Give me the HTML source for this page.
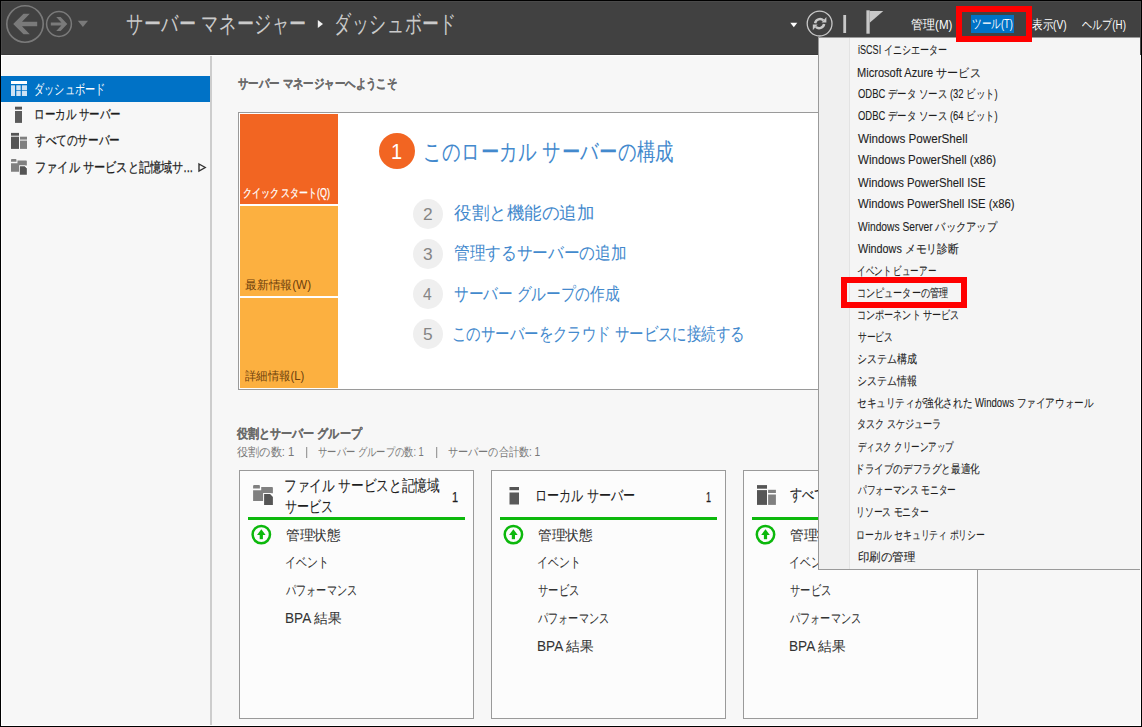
<!DOCTYPE html><html lang="ja"><head><meta charset="utf-8"><style>
*{margin:0;padding:0;box-sizing:border-box}
html,body{width:1142px;height:727px;overflow:hidden;background:#000}
body{position:relative;font-family:"Liberation Sans",sans-serif}
.a{position:absolute}
.tx{position:absolute;white-space:pre;line-height:1;transform-origin:0 0}
</style></head><body>
<div class="a" style="left:1px;top:1px;width:1140px;height:725px;background:#ffffff"></div>
<div class="a" style="left:2px;top:56px;width:1138px;height:669px;background:#f7f7f7"></div>
<div class="a" style="left:1px;top:1px;width:1140px;height:54px;background:#4a4a4a"></div>
<div class="a" style="left:2px;top:2px;width:1138px;height:52px;background:#414141"></div>
<div class="a" style="left:2px;top:54px;width:1138px;height:1px;background:#3a3a3a"></div>
<div class="a" style="left:210px;top:56px;width:2px;height:669px;background:#cdcdcd"></div>
<div class="a" style="left:1px;top:76px;width:209px;height:26px;background:#0072c6"></div>
<div class="a" style="left:238px;top:112px;width:600px;height:278px;background:#fff;border:1px solid #9a9a9a"></div>
<div class="a" style="left:240px;top:114px;width:98px;height:90px;background:#f26522"></div>
<div class="a" style="left:240px;top:206px;width:98px;height:90px;background:#fcb040"></div>
<div class="a" style="left:240px;top:298px;width:98px;height:90px;background:#fcb040"></div>
<div class="a" style="left:379px;top:133px;width:36px;height:36px;border-radius:50%;background:#f26522"></div>
<div class="a" style="left:413px;top:198.5px;width:30px;height:30px;border-radius:50%;background:#efefef"></div>
<div class="a" style="left:413px;top:238.5px;width:30px;height:30px;border-radius:50%;background:#efefef"></div>
<div class="a" style="left:413px;top:278.5px;width:30px;height:30px;border-radius:50%;background:#efefef"></div>
<div class="a" style="left:413px;top:318.5px;width:30px;height:30px;border-radius:50%;background:#efefef"></div>
<div class="a" style="left:239px;top:470px;width:235px;height:249px;background:#fcfcfc;border:1px solid #9a9a9a"></div>
<div class="a" style="left:248px;top:517px;width:217px;height:3px;background:#0cb80c"></div>
<div class="a" style="left:491px;top:470px;width:235px;height:249px;background:#fcfcfc;border:1px solid #9a9a9a"></div>
<div class="a" style="left:500px;top:517px;width:217px;height:3px;background:#0cb80c"></div>
<div class="a" style="left:743px;top:470px;width:235px;height:249px;background:#fcfcfc;border:1px solid #9a9a9a"></div>
<div class="a" style="left:752px;top:517px;width:217px;height:3px;background:#0cb80c"></div>
<svg class="a" style="left:0;top:0" width="1142" height="727" viewBox="0 0 1142 727">
<circle cx="25" cy="24" r="18.2" fill="none" stroke="#7a7a7a" stroke-width="1.6"/>
<path d="M13.2 24 L23.5 13.8 L29.8 13.8 L22 21.8 L37.2 21.8 L37.2 26.3 L22 26.3 L29.8 34.2 L23.5 34.2 Z" fill="#7a7a7a"/>
<circle cx="59" cy="24" r="12.4" fill="none" stroke="#7a7a7a" stroke-width="1.5"/>
<path d="M67.3 24 L60.6 16.9 L56.2 16.9 L61.4 22.5 L50.8 22.5 L50.8 25.5 L61.4 25.5 L56.2 31.1 L60.6 31.1 Z" fill="#7a7a7a"/>
<path d="M77.8 20.8 L88 20.8 L82.9 27 Z" fill="#7a7a7a"/>
<path d="M317.8 20 L323 24 L317.8 28 Z" fill="#f0f0f0"/>
<path d="M790.3 22.8 L797.3 22.8 L793.8 27.3 Z" fill="#ffffff"/>
<circle cx="819.6" cy="23.6" r="12.4" fill="none" stroke="#c8c8c8" stroke-width="1.3"/>
<path d="M815.1 23.2 A5 5 0 0 1 823.4 20.4" fill="none" stroke="#c8c8c8" stroke-width="2.5"/>
<path d="M821.6 22.6 L826.4 16.9 L826.4 22.6 Z" fill="#c8c8c8"/>
<path d="M824.1 24 A5 5 0 0 1 815.8 26.8" fill="none" stroke="#c8c8c8" stroke-width="2.5"/>
<path d="M817.6 24.6 L812.8 30.3 L812.8 24.6 Z" fill="#c8c8c8"/>
<rect x="843.3" y="15" width="2.8" height="18" fill="#c8c8c8"/>
<rect x="866.4" y="10.3" width="3.3" height="23.4" fill="#c8c8c8"/>
<path d="M869.7 10.9 L883.3 10.9 L869.7 22.8 Z" fill="#c8c8c8"/>
<rect x="11" y="81" width="16" height="3" fill="#ffffff"/>
<rect x="11" y="85.3" width="4" height="10.7" fill="#cfe2f3"/>
<rect x="16.3" y="85.3" width="4.4" height="5" fill="#cfe2f3"/>
<rect x="21.9" y="85.3" width="5.1" height="5" fill="#cfe2f3"/>
<rect x="16.3" y="91" width="4.4" height="5" fill="#cfe2f3"/>
<rect x="21.9" y="91" width="5.1" height="5" fill="#cfe2f3"/>
<rect x="15" y="106.7" width="7" height="2.9" fill="#555"/>
<rect x="15" y="111" width="7" height="11.9" fill="#5a5a5a"/>
<rect x="11.0" y="132.9" width="8" height="2.8" fill="#555"/><rect x="11.0" y="136.7" width="8" height="12.2" fill="#555"/><rect x="20.0" y="136.7" width="7" height="2.9" fill="#808080"/><rect x="20.0" y="140.6" width="7" height="8.3" fill="#808080"/>
<g transform="translate(11.00 158.90) scale(0.800)"><path d="M1 0 L6 0 Q6.8 0 6.8 1 L6.8 3.6 L0 3.6 L0 1 Q0 0 1 0 Z" fill="#808080"/><path d="M8.1 2 L19 2 Q19.8 2 19.8 3 L19.8 8.2 L10.5 8.2 L10.5 16 L0 16 L0 5.3 L8.1 5.3 Z" fill="#808080"/><path d="M10 8.1 L17.6 8.1 L20.8 11.3 L20.8 20.9 L10 20.9 Z" fill="#fcfcfc"/><path d="M11 9.1 L17.2 9.1 L19.8 11.7 L19.8 19.9 L11 19.9 Z" fill="#555"/><path d="M17.2 9.1 L19.8 9.1 L19.8 11.7 Z" fill="#fff"/></g>
<path d="M199 164 L205.2 167.5 L199 171 Z" fill="none" stroke="#333" stroke-width="1.4"/>
<rect x="306.2" y="447" width="1" height="11" fill="#888"/>
<rect x="436.2" y="447" width="1" height="11" fill="#888"/>
<g transform="translate(253.10 485.00) scale(1.000)"><path d="M1 0 L6 0 Q6.8 0 6.8 1 L6.8 3.6 L0 3.6 L0 1 Q0 0 1 0 Z" fill="#808080"/><path d="M8.1 2 L19 2 Q19.8 2 19.8 3 L19.8 8.2 L10.5 8.2 L10.5 16 L0 16 L0 5.3 L8.1 5.3 Z" fill="#808080"/><path d="M10 8.1 L17.6 8.1 L20.8 11.3 L20.8 20.9 L10 20.9 Z" fill="#fcfcfc"/><path d="M11 9.1 L17.2 9.1 L19.8 11.7 L19.8 19.9 L11 19.9 Z" fill="#555"/><path d="M17.2 9.1 L19.8 9.1 L19.8 11.7 Z" fill="#fff"/></g>
<rect x="509.5" y="487" width="9.5" height="3.2" fill="#555"/>
<rect x="509.5" y="492.5" width="9.5" height="12" fill="#5a5a5a"/>
<rect x="757.0" y="485.1" width="10" height="3.6" fill="#555"/><rect x="757.0" y="490.1" width="10" height="14.8" fill="#555"/><rect x="768.1" y="489.8" width="7.8" height="3.2" fill="#808080"/><rect x="768.1" y="494.5" width="7.8" height="10.4" fill="#808080"/>
<circle cx="261.3" cy="534.6" r="8.7" fill="none" stroke="#0cb80c" stroke-width="2.5"/>
<path d="M261.3 529.2 L265.6 534.9 L257.0 534.9 Z" fill="#0cb80c"/>
<rect x="259.7" y="534.6" width="3.2" height="4.6" fill="#0cb80c"/>
<circle cx="513.4" cy="534.6" r="8.7" fill="none" stroke="#0cb80c" stroke-width="2.5"/>
<path d="M513.4 529.2 L517.7 534.9 L509.1 534.9 Z" fill="#0cb80c"/>
<rect x="511.8" y="534.6" width="3.2" height="4.6" fill="#0cb80c"/>
<circle cx="765.5" cy="534.6" r="8.7" fill="none" stroke="#0cb80c" stroke-width="2.5"/>
<path d="M765.5 529.2 L769.8 534.9 L761.2 534.9 Z" fill="#0cb80c"/>
<rect x="763.9" y="534.6" width="3.2" height="4.6" fill="#0cb80c"/>
</svg>
<div class="tx" style="left:125.59px;top:11.75px;font-size:24px;font-weight:normal;color:#cacaca;transform:scaleX(0.7148)">サーバー マネージャー</div>
<div class="tx" style="left:333.99px;top:12.35px;font-size:24px;font-weight:normal;color:#cacaca;transform:scaleX(0.7060)">ダッシュボード</div>
<div class="tx" style="left:910.80px;top:18.75px;font-size:12.5px;font-weight:normal;color:#ffffff;transform:scaleX(0.9250)">管理(M)</div>
<div class="tx" style="left:1032.00px;top:18.75px;font-size:12.5px;font-weight:normal;color:#ffffff;transform:scaleX(0.8095)">表示(V)</div>
<div class="tx" style="left:1082.00px;top:18.75px;font-size:12.5px;font-weight:normal;color:#ffffff;transform:scaleX(0.7786)">ヘルプ(H)</div>
<div class="tx" style="left:33.95px;top:81.60px;font-size:14px;font-weight:normal;color:#ffffff;transform:scaleX(0.7274)">ダッシュボード</div>
<div class="tx" style="left:33.90px;top:107.00px;font-size:14px;font-weight:normal;color:#1e1e1e;transform:scaleX(0.7504);-webkit-text-stroke:0.25px #1e1e1e">ローカル サーバー</div>
<div class="tx" style="left:35.40px;top:133.00px;font-size:14px;font-weight:normal;color:#1e1e1e;transform:scaleX(0.7586);-webkit-text-stroke:0.25px #1e1e1e">すべてのサーバー</div>
<div class="tx" style="left:34.60px;top:160.25px;font-size:14px;font-weight:normal;color:#1e1e1e;transform:scaleX(0.7990);-webkit-text-stroke:0.25px #1e1e1e">ファイル サービスと記憶域サ...</div>
<div class="tx" style="left:237.80px;top:76.65px;font-size:13px;font-weight:bold;color:#6a6a6a;transform:scaleX(0.8015);-webkit-text-stroke:0.15px #6a6a6a">サーバー マネージャーへようこそ</div>
<div class="tx" style="left:243.45px;top:186.55px;font-size:12px;font-weight:normal;color:#ffffff;transform:scaleX(0.7457);-webkit-text-stroke:0.25px #ffffff">クイック スタート(Q)</div>
<div class="tx" style="left:244.60px;top:278.50px;font-size:12px;font-weight:normal;color:#6e3f0c;transform:scaleX(0.9821)">最新情報(W)</div>
<div class="tx" style="left:244.60px;top:370.25px;font-size:12px;font-weight:normal;color:#6e3f0c;transform:scaleX(0.9460)">詳細情報(L)</div>
<div class="tx" style="left:423.07px;top:139.60px;font-size:24px;font-weight:normal;color:#4389cd;transform:scaleX(0.7674)">このローカル サーバーの構成</div>
<div class="tx" style="left:453.50px;top:204.20px;font-size:18px;font-weight:normal;color:#4389cd;transform:scaleX(0.9734)">役割と機能の追加</div>
<div class="tx" style="left:453.50px;top:244.20px;font-size:18px;font-weight:normal;color:#4389cd;transform:scaleX(0.8701)">管理するサーバーの追加</div>
<div class="tx" style="left:453.60px;top:284.70px;font-size:18px;font-weight:normal;color:#4389cd;transform:scaleX(0.8148)">サーバー グループの作成</div>
<div class="tx" style="left:452.00px;top:324.60px;font-size:18px;font-weight:normal;color:#4389cd;transform:scaleX(0.8017)">このサーバーをクラウド サービスに接続する</div>
<div class="tx" style="left:237.20px;top:426.95px;font-size:13px;font-weight:bold;color:#6a6a6a;transform:scaleX(0.8500);-webkit-text-stroke:0.15px #6a6a6a">役割とサーバー グループ</div>
<div class="tx" style="left:237.20px;top:445.50px;font-size:12px;font-weight:normal;color:#777777;transform:scaleX(0.9344)">役割の数: 1</div>
<div class="tx" style="left:318.20px;top:445.50px;font-size:12px;font-weight:normal;color:#777777;transform:scaleX(0.7737)">サーバー グループの数: 1</div>
<div class="tx" style="left:448.20px;top:445.50px;font-size:12px;font-weight:normal;color:#777777;transform:scaleX(0.8431)">サーバーの合計数: 1</div>
<div class="tx" style="left:284.21px;top:478.25px;font-size:16px;font-weight:normal;color:#1e1e1e;transform:scaleX(0.7923);-webkit-text-stroke:0.10px #1e1e1e">ファイル サービスと記憶域</div>
<div class="tx" style="left:285.00px;top:499.25px;font-size:16px;font-weight:normal;color:#1e1e1e;transform:scaleX(0.7532);-webkit-text-stroke:0.10px #1e1e1e">サービス</div>
<div class="tx" style="left:535.33px;top:488.30px;font-size:16px;font-weight:normal;color:#1e1e1e;transform:scaleX(0.7555);-webkit-text-stroke:0.10px #1e1e1e">ローカル サーバー</div>
<div class="tx" style="left:790.20px;top:487.20px;font-size:16px;font-weight:normal;color:#1e1e1e;transform:scaleX(0.7591);-webkit-text-stroke:0.10px #1e1e1e">すべてのサーバー</div>
<div class="tx" style="left:285.90px;top:527.80px;font-size:14px;font-weight:normal;color:#333333;transform:scaleX(0.9732);-webkit-text-stroke:0.05px #333333">管理状態</div>
<div class="tx" style="left:285.12px;top:554.80px;font-size:14px;font-weight:normal;color:#333333;transform:scaleX(0.7750);-webkit-text-stroke:0.05px #333333">イベント</div>
<div class="tx" style="left:285.90px;top:582.80px;font-size:14px;font-weight:normal;color:#333333;transform:scaleX(0.7247);-webkit-text-stroke:0.05px #333333">パフォーマンス</div>
<div class="tx" style="left:284.93px;top:611.30px;font-size:14px;font-weight:normal;color:#333333;transform:scaleX(0.9719);-webkit-text-stroke:0.05px #333333">BPA 結果</div>
<div class="tx" style="left:537.60px;top:527.80px;font-size:14px;font-weight:normal;color:#333333;transform:scaleX(0.9732);-webkit-text-stroke:0.05px #333333">管理状態</div>
<div class="tx" style="left:536.83px;top:554.80px;font-size:14px;font-weight:normal;color:#333333;transform:scaleX(0.7750);-webkit-text-stroke:0.05px #333333">イベント</div>
<div class="tx" style="left:537.60px;top:583.30px;font-size:14px;font-weight:normal;color:#333333;transform:scaleX(0.7364);-webkit-text-stroke:0.05px #333333">サービス</div>
<div class="tx" style="left:537.60px;top:610.80px;font-size:14px;font-weight:normal;color:#333333;transform:scaleX(0.7247);-webkit-text-stroke:0.05px #333333">パフォーマンス</div>
<div class="tx" style="left:536.63px;top:639.30px;font-size:14px;font-weight:normal;color:#333333;transform:scaleX(0.9719);-webkit-text-stroke:0.05px #333333">BPA 結果</div>
<div class="tx" style="left:789.60px;top:527.80px;font-size:14px;font-weight:normal;color:#333333;transform:scaleX(0.9732);-webkit-text-stroke:0.05px #333333">管理状態</div>
<div class="tx" style="left:788.83px;top:554.80px;font-size:14px;font-weight:normal;color:#333333;transform:scaleX(0.7750);-webkit-text-stroke:0.05px #333333">イベント</div>
<div class="tx" style="left:789.60px;top:583.30px;font-size:14px;font-weight:normal;color:#333333;transform:scaleX(0.7364);-webkit-text-stroke:0.05px #333333">サービス</div>
<div class="tx" style="left:789.60px;top:610.80px;font-size:14px;font-weight:normal;color:#333333;transform:scaleX(0.7247);-webkit-text-stroke:0.05px #333333">パフォーマンス</div>
<div class="tx" style="left:788.63px;top:639.30px;font-size:14px;font-weight:normal;color:#333333;transform:scaleX(0.9719);-webkit-text-stroke:0.05px #333333">BPA 結果</div>
<div class="tx" style="left:390.59px;top:140.75px;font-size:22px;font-weight:normal;color:#ffffff;transform:scaleX(0.9091)">1</div>
<div class="tx" style="left:423.30px;top:205.50px;font-size:17px;font-weight:normal;color:#858585;transform:scaleX(1.0222)">2</div>
<div class="tx" style="left:423.30px;top:245.50px;font-size:17px;font-weight:normal;color:#858585;transform:scaleX(1.0222)">3</div>
<div class="tx" style="left:423.30px;top:285.50px;font-size:17px;font-weight:normal;color:#858585;transform:scaleX(0.9200)">4</div>
<div class="tx" style="left:423.30px;top:325.50px;font-size:17px;font-weight:normal;color:#858585;transform:scaleX(1.0222)">5</div>
<div class="tx" style="left:452.41px;top:489.60px;font-size:14px;font-weight:normal;color:#1e1e1e;transform:scaleX(0.7857);-webkit-text-stroke:0.25px #1e1e1e">1</div>
<div class="tx" style="left:705.56px;top:489.90px;font-size:14px;font-weight:normal;color:#1e1e1e;transform:scaleX(0.6429);-webkit-text-stroke:0.25px #1e1e1e">1</div>
<div class="a" style="left:818px;top:37px;width:322px;height:533px;background:#f5f5f5;border:1px solid #9a9a9a;border-right:none"></div>
<div class="a" style="left:819px;top:38px;width:30px;height:531px;background:#f0f0f0"></div>
<div class="a" style="left:849px;top:38px;width:1px;height:531px;background:#e3e3e3"></div>
<div class="tx" style="left:857.50px;top:44.00px;font-size:12px;font-weight:normal;color:#1e1e1e;transform:scaleX(0.7551);-webkit-text-stroke:0.10px #1e1e1e">iSCSI イニシエーター</div>
<div class="tx" style="left:856.58px;top:66.50px;font-size:12px;font-weight:normal;color:#1e1e1e;transform:scaleX(0.9220);-webkit-text-stroke:0.10px #1e1e1e">Microsoft Azure サービス</div>
<div class="tx" style="left:857.50px;top:88.00px;font-size:12px;font-weight:normal;color:#1e1e1e;transform:scaleX(0.7881);-webkit-text-stroke:0.10px #1e1e1e">ODBC データ ソース (32 ビット)</div>
<div class="tx" style="left:857.50px;top:110.00px;font-size:12px;font-weight:normal;color:#1e1e1e;transform:scaleX(0.7881);-webkit-text-stroke:0.10px #1e1e1e">ODBC データ ソース (64 ビット)</div>
<div class="tx" style="left:857.50px;top:133.00px;font-size:12px;font-weight:normal;color:#1e1e1e;transform:scaleX(0.9714);-webkit-text-stroke:0.10px #1e1e1e">Windows PowerShell</div>
<div class="tx" style="left:857.50px;top:153.50px;font-size:12px;font-weight:normal;color:#1e1e1e;transform:scaleX(0.9636);-webkit-text-stroke:0.10px #1e1e1e">Windows PowerShell (x86)</div>
<div class="tx" style="left:857.50px;top:177.00px;font-size:12px;font-weight:normal;color:#1e1e1e;transform:scaleX(0.9412);-webkit-text-stroke:0.10px #1e1e1e">Windows PowerShell ISE</div>
<div class="tx" style="left:857.50px;top:197.50px;font-size:12px;font-weight:normal;color:#1e1e1e;transform:scaleX(0.9428);-webkit-text-stroke:0.10px #1e1e1e">Windows PowerShell ISE (x86)</div>
<div class="tx" style="left:857.50px;top:220.50px;font-size:12px;font-weight:normal;color:#1e1e1e;transform:scaleX(0.8543);-webkit-text-stroke:0.10px #1e1e1e">Windows Server バックアップ</div>
<div class="tx" style="left:857.50px;top:242.50px;font-size:12px;font-weight:normal;color:#1e1e1e;transform:scaleX(0.9000);-webkit-text-stroke:0.10px #1e1e1e">Windows メモリ診断</div>
<div class="tx" style="left:856.79px;top:264.50px;font-size:12px;font-weight:normal;color:#1e1e1e;transform:scaleX(0.7100);-webkit-text-stroke:0.10px #1e1e1e">イベント ビューアー</div>
<div class="tx" style="left:856.74px;top:286.50px;font-size:12px;font-weight:normal;color:#1e1e1e;transform:scaleX(0.7580);-webkit-text-stroke:0.10px #1e1e1e">コンピューターの管理</div>
<div class="tx" style="left:856.74px;top:308.50px;font-size:12px;font-weight:normal;color:#1e1e1e;transform:scaleX(0.7579);-webkit-text-stroke:0.10px #1e1e1e">コンポーネント サービス</div>
<div class="tx" style="left:857.50px;top:330.50px;font-size:12px;font-weight:normal;color:#1e1e1e;transform:scaleX(0.7277);-webkit-text-stroke:0.10px #1e1e1e">サービス</div>
<div class="tx" style="left:856.66px;top:352.50px;font-size:12px;font-weight:normal;color:#1e1e1e;transform:scaleX(0.8352);-webkit-text-stroke:0.10px #1e1e1e">システム構成</div>
<div class="tx" style="left:856.66px;top:374.50px;font-size:12px;font-weight:normal;color:#1e1e1e;transform:scaleX(0.8352);-webkit-text-stroke:0.10px #1e1e1e">システム情報</div>
<div class="tx" style="left:856.70px;top:396.50px;font-size:12px;font-weight:normal;color:#1e1e1e;transform:scaleX(0.8007);-webkit-text-stroke:0.10px #1e1e1e">セキュリティが強化された Windows ファイアウォール</div>
<div class="tx" style="left:856.74px;top:418.00px;font-size:12px;font-weight:normal;color:#1e1e1e;transform:scaleX(0.7593);-webkit-text-stroke:0.10px #1e1e1e">タスク スケジューラ</div>
<div class="tx" style="left:857.50px;top:440.50px;font-size:12px;font-weight:normal;color:#1e1e1e;transform:scaleX(0.7074);-webkit-text-stroke:0.10px #1e1e1e">ディスク クリーンアップ</div>
<div class="tx" style="left:855.30px;top:462.50px;font-size:12px;font-weight:normal;color:#1e1e1e;transform:scaleX(0.7993);-webkit-text-stroke:0.10px #1e1e1e">ドライブのデフラグと最適化</div>
<div class="tx" style="left:857.50px;top:484.00px;font-size:12px;font-weight:normal;color:#1e1e1e;transform:scaleX(0.7244);-webkit-text-stroke:0.10px #1e1e1e">パフォーマンス モニター</div>
<div class="tx" style="left:856.03px;top:506.00px;font-size:12px;font-weight:normal;color:#1e1e1e;transform:scaleX(0.7330);-webkit-text-stroke:0.10px #1e1e1e">リソース モニター</div>
<div class="tx" style="left:856.02px;top:528.50px;font-size:12px;font-weight:normal;color:#1e1e1e;transform:scaleX(0.7387);-webkit-text-stroke:0.10px #1e1e1e">ローカル セキュリティ ポリシー</div>
<div class="tx" style="left:857.50px;top:550.50px;font-size:12px;font-weight:normal;color:#1e1e1e;transform:scaleX(0.9533);-webkit-text-stroke:0.10px #1e1e1e">印刷の管理</div>
<div class="a" style="left:971px;top:15px;width:43px;height:18px;background:#0072c6"></div>
<div class="tx" style="left:972.26px;top:18.00px;font-size:12.5px;font-weight:normal;color:#ffffff;transform:scaleX(0.7407)">ツール(T)</div>
<div class="a" style="left:956px;top:6px;width:76px;height:36px;border:6px solid #ff0000"></div>
<div class="a" style="left:841px;top:277px;width:126px;height:31px;border:6px solid #ff0000"></div>
</body></html>
